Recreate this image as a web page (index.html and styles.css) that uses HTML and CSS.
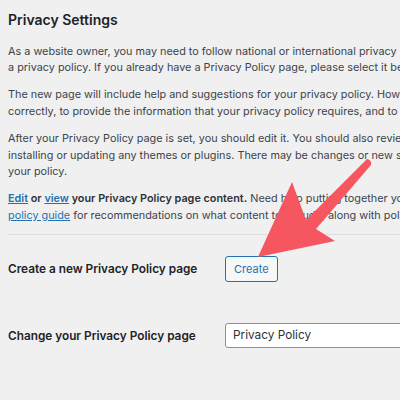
FILE: index.html
```html
<!DOCTYPE html>
<html>
<head>
<meta charset="utf-8">
<link rel="stylesheet" href="styles.css">
</head>
<body>
<div class="wrap">
  <h2 class="title">Privacy Settings</h2>
  <p class="para">As a website owner, you may need to follow national or international privacy laws. For example, you may need to create and display<br>a privacy policy. If you already have a Privacy Policy page, please select it below. If not, please create one.</p>
  <p class="para">The new page will include help and suggestions for your privacy policy. However, it is your responsibility to use those resources<br>correctly, to provide the information that your privacy policy requires, and to keep that information current and accurate.</p>
  <p class="para">After your Privacy Policy page is set, you should edit it. You should also review it from time to time, especially after<br>installing or updating any themes or plugins. There may be changes or new suggested information for you to consider adding to<br>your policy.</p>
  <p class="para"><strong><a class="link" href="#">Edit</a> or <a class="link" href="#">view</a> your Privacy Policy page content.</strong> Need help putting together your new Privacy Policy page? Check out our <a class="link plain" href="#">privacy</a><br><a class="link plain" href="#">policy guide</a> for recommendations on what content to include, along with policies suggested by your plugins and theme.</p>
  <hr class="sep">
  <div class="row row-create">
    <div class="label">Create a new Privacy Policy page</div>
    <button class="btn">Create</button>
  </div>
  <div class="row row-change">
    <div class="label">Change your Privacy Policy page</div>
    <div class="select">Privacy Policy</div>
  </div>
</div>
<svg class="arrow" width="400" height="400" viewBox="0 0 400 400">
  <path d="M258 257 L292 182 L306 220 L367 159 Q372 160 371 165 L316 229 L335 241 Z" fill="#f5565f"/>
</svg>
</body>
</html>
```
FILE: styles.css
```css
html, body {
  margin: 0;
  padding: 0;
  background: #f0f0f1;
  overflow: hidden;
  width: 400px;
  height: 400px;
}
body {
  font-family: Inter, "Noto Sans", "Liberation Sans", sans-serif;
  color: #3c434a;
}
.wrap {
  padding: 11px 0 0 8px;
}
.title {
  margin: 0;
  font-size: 14px;
  line-height: 18px;
  font-weight: 600;
  color: #1d2327;
}
.para {
  margin: 0 0 11px 0;
  font-size: 10.85px;
  line-height: 16.4px;
  white-space: nowrap;
}
.title + .para {
  margin-top: 13.5px;
}
.para strong {
  font-weight: 600;
  color: #2c3338;
}
.link {
  color: #2271b1;
  text-decoration: underline;
}
.sep {
  border: 0;
  border-top: 1px solid #dcdcde;
  margin: 10px 0 0 0;
  height: 0;
}
.row {
  display: flex;
  align-items: center;
  height: 52px;
}
.row-create {
  margin-top: 8px;
}
.row-change {
  margin-top: 14.5px;
}
.label {
  width: 217px;
  flex: none;
  font-size: 11.8px;
  font-weight: 600;
  color: #1d2327;
}
.btn {
  height: 26px;
  padding: 0 8px;
  border: 1px solid #2271b1;
  border-radius: 3px;
  background: #f6f7f7;
  color: #2271b1;
  font-family: inherit;
  font-size: 11px;
  line-height: 24px;
}
.select {
  width: 200px;
  flex: none;
  height: 25px;
  box-sizing: border-box;
  border: 1px solid #8c8f94;
  border-radius: 3px;
  background: #fff;
  font-size: 11.8px;
  line-height: 23px;
  padding-left: 7px;
  color: #2c3338;
}
.arrow {
  position: absolute;
  left: 0;
  top: 0;
}
```
